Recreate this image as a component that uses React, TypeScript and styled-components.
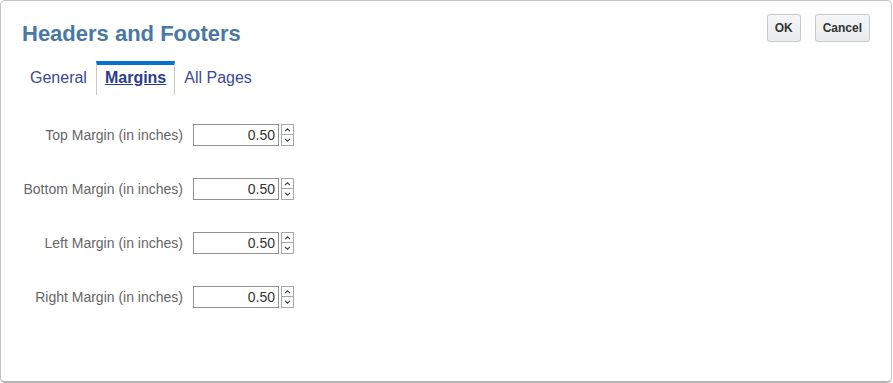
import React from "react";
import styled, { createGlobalStyle } from "styled-components";

const GlobalStyle = createGlobalStyle`
  html, body {
    margin: 0;
    padding: 0;
    background: #ffffff;
    font-family: "Liberation Sans", Arial, sans-serif;
  }
`;

const MARGINS = [
  { label: "Top Margin (in inches)", value: "0.50" },
  { label: "Bottom Margin (in inches)", value: "0.50" },
  { label: "Left Margin (in inches)", value: "0.50" },
  { label: "Right Margin (in inches)", value: "0.50" },
];

const TABS = ["General", "Margins", "All Pages"];

const Dialog = styled.section`
  box-sizing: border-box;
  width: 892px;
  height: 383px;
  border: 1px solid #c4c4c4;
  border-bottom: 2px solid #b4b4b4;
  border-radius: 5px;
  background: #ffffff;
  padding: 0 20px;
  display: flex;
  flex-direction: column;
`;

const Header = styled.header`
  display: flex;
  justify-content: space-between;
  align-items: flex-start;
  padding-top: 13px;
`;

const Title = styled.h1`
  margin: 7px 0 0 1px;
  font-size: 22px;
  line-height: 26px;
  font-weight: bold;
  color: #4a78a2;
`;

const Actions = styled.div`
  display: flex;
  gap: 14px;
  margin-right: 1px;
`;

const Button = styled.button`
  box-sizing: border-box;
  height: 28px;
  padding: 0 7px;
  border: 1px solid #c5c8cc;
  border-radius: 3px;
  background: linear-gradient(#f4f5f6, #e9ebed);
  font-family: "Liberation Sans", Arial, sans-serif;
  font-size: 12px;
  font-weight: bold;
  color: #333333;
`;

const TabBar = styled.nav`
  display: flex;
  margin-top: 14px;
`;

const Tab = styled.div<{ $active?: boolean }>`
  padding: 4px 8px 8px;
  line-height: 18px;
  font-size: 16px;
  border-top: 4px solid ${(p) => (p.$active ? "#0572ce" : "transparent")};
  border-left: 1px solid ${(p) => (p.$active ? "#c9c9c9" : "transparent")};
  border-right: 1px solid ${(p) => (p.$active ? "#c9c9c9" : "transparent")};
  color: ${(p) => (p.$active ? "#2b3d8c" : "#3d4a93")};
  font-weight: ${(p) => (p.$active ? "bold" : "normal")};
  text-decoration: ${(p) => (p.$active ? "underline" : "none")};
`;

const Form = styled.div`
  display: grid;
  grid-template-columns: 162px auto;
  column-gap: 10px;
  row-gap: 32px;
  padding-top: 29px;
  justify-content: start;
  align-items: center;
`;

const Label = styled.label`
  text-align: right;
  font-size: 14px;
  color: #666666;
  white-space: nowrap;
`;

const Field = styled.div`
  display: flex;
  align-items: flex-start;
  gap: 2px;
`;

const NumberInput = styled.input`
  box-sizing: border-box;
  width: 86px;
  height: 22px;
  border: 1px solid #8e9096;
  padding: 0 3px 0 2px;
  text-align: right;
  font-family: "Liberation Sans", Arial, sans-serif;
  font-size: 14px;
  color: #333333;
  outline: none;
`;

const Spinner = styled.div`
  display: flex;
  flex-direction: column;
  width: 13px;
  height: 22px;
`;

const SpinButton = styled.div<{ $down?: boolean }>`
  box-sizing: border-box;
  height: 11px;
  border: 1px solid #a6a8ad;
  border-top-width: ${(p) => (p.$down ? "0" : "1px")};
  background: #ffffff;
  display: flex;
  align-items: center;
  justify-content: center;
`;

const Caret = ({ down }: { down?: boolean }) => (
  <svg width="7" height="4" viewBox="0 0 7 4">
    <path
      d={down ? "M1 0.8 L3.5 3.2 L6 0.8" : "M1 3.2 L3.5 0.8 L6 3.2"}
      fill="none"
      stroke="#444"
      strokeWidth="1.1"
    />
  </svg>
);

export default function App() {
  return (
    <>
      <GlobalStyle />
      <Dialog>
        <Header>
          <Title>Headers and Footers</Title>
          <Actions>
            <Button>OK</Button>
            <Button>Cancel</Button>
          </Actions>
        </Header>
        <TabBar>
          {TABS.map((t) => (
            <Tab key={t} $active={t === "Margins"}>
              {t}
            </Tab>
          ))}
        </TabBar>
        <Form>
          {MARGINS.map(({ label, value }) => (
            <React.Fragment key={label}>
              <Label>{label}</Label>
              <Field>
                <NumberInput defaultValue={value} />
                <Spinner>
                  <SpinButton>
                    <Caret />
                  </SpinButton>
                  <SpinButton $down>
                    <Caret down />
                  </SpinButton>
                </Spinner>
              </Field>
            </React.Fragment>
          ))}
        </Form>
      </Dialog>
    </>
  );
}
